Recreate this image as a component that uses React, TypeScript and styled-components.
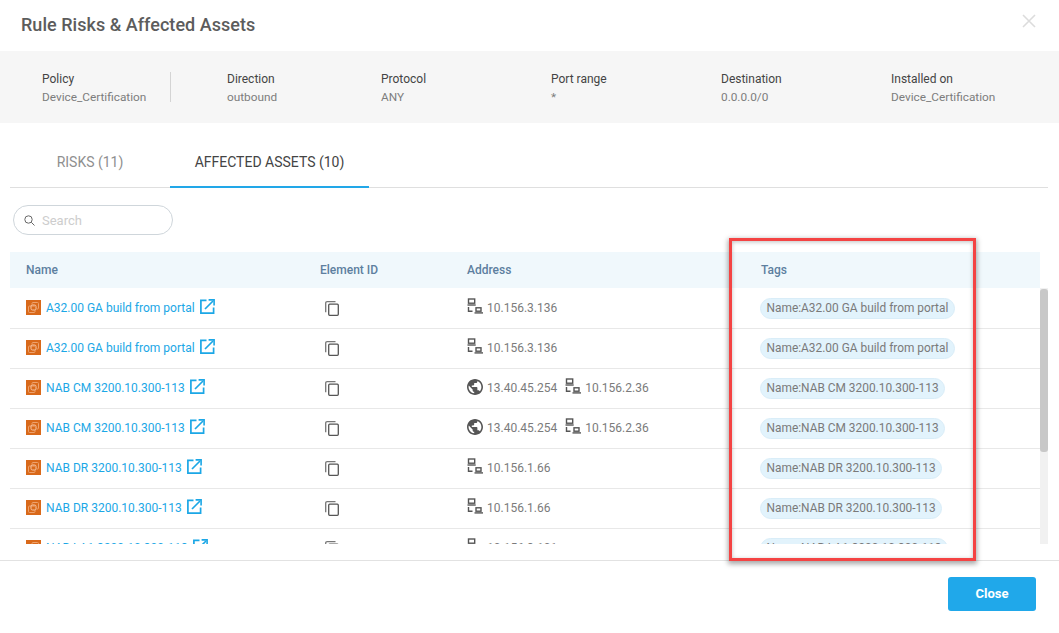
import React from "react";
import styled, { createGlobalStyle } from "styled-components";

const GlobalStyle = createGlobalStyle`
  html, body {
    margin: 0;
    padding: 0;
    background: #fff;
    font-family: Roboto, "Liberation Sans", sans-serif;
  }
`;

const Modal = styled.div`
  position: relative;
  width: 1059px;
  height: 633px;
  overflow: hidden;
  display: flex;
  flex-direction: column;
  background: #fff;
`;

const Header = styled.div`
  height: 51px;
  flex: none;
  display: flex;
  align-items: center;
  justify-content: space-between;
  padding: 0 23px 2px 21px;
  box-sizing: border-box;
`;

const Title = styled.h1`
  margin: 0;
  font-size: 18px;
  font-weight: 500;
  letter-spacing: 0.03px;
  color: #5c5c5c;
`;

const CloseX = styled.svg`
  width: 14px;
  height: 14px;
  margin-bottom: 8px;
  stroke: #dcdcdc;
  stroke-width: 1.6;
  fill: none;
`;

const Summary = styled.div`
  height: 72px;
  flex: none;
  background: #f6f6f6;
  display: flex;
  align-items: center;
  padding-left: 42px;
`;

const SummaryItem = styled.div<{ $width: number; $divided?: boolean }>`
  width: ${(p) => p.$width}px;
  height: 30px;
  flex: none;
  box-sizing: border-box;
  font-size: 12px;
  line-height: 18px;
  border-right: ${(p) => (p.$divided ? "1px solid #d4d4d4" : "none")};
`;

const SummaryLabel = styled.div`
  color: #444;
  margin-top: -2px;
`;

const SummaryValue = styled.div`
  color: #7d7d7d;
  font-size: 11.8px;
  white-space: nowrap;
`;

const DividerGap = styled.div`
  width: 56px;
  flex: none;
`;

const Tabs = styled.div`
  height: 65px;
  flex: none;
  margin: 0 11px 0 10px;
  display: flex;
  box-sizing: border-box;
  border-bottom: 1px solid #dfdfdf;
`;

const Tab = styled.div<{ $active?: boolean }>`
  width: ${(p) => (p.$active ? 199 : 160)}px;
  height: 65px;
  box-sizing: border-box;
  display: flex;
  align-items: center;
  justify-content: center;
  font-size: 14px;
  padding-top: 15px;
  color: ${(p) => (p.$active ? "#444" : "#8f8f8f")};
  border-bottom: 2px solid ${(p) => (p.$active ? "#22a7e8" : "transparent")};
`;

const SearchRow = styled.div`
  height: 64px;
  flex: none;
  padding: 17px 0 0 13px;
  box-sizing: border-box;
`;

const SearchBox = styled.div`
  width: 160px;
  height: 30px;
  box-sizing: border-box;
  border: 1px solid #cfd6db;
  border-radius: 15px;
  display: flex;
  align-items: center;
  gap: 7px;
  padding-left: 10px;
  font-size: 13px;
  color: #cdcdcd;
`;

const TableWrap = styled.div`
  margin-left: 10px;
  width: 1038px;
  height: 292px;
  flex: none;
  display: flex;
  flex-direction: column;
`;

const HeadRow = styled.div`
  width: 1030px;
  height: 36px;
  flex: none;
  display: grid;
  grid-template-columns: 294px 147px 294px 295px;
  align-items: center;
  background: #f0f8fc;
  font-size: 12px;
  font-weight: 500;
  color: #5d7f9f;
`;

const HeadCell = styled.div`
  padding-left: 16px;
`;

const BodyWrap = styled.div`
  position: relative;
  height: 256px;
  overflow: hidden;
  display: flex;
`;

const Rows = styled.div`
  width: 1030px;
  flex: none;
  padding-top: 1px;
`;

const Row = styled.div`
  height: 40px;
  box-sizing: border-box;
  padding-bottom: 2px;
  display: grid;
  grid-template-columns: 294px 147px 294px 295px;
  align-items: center;
  border-bottom: 1px solid #e8e8e8;
  font-size: 12px;
`;

const NameCell = styled.div`
  padding-left: 16px;
  display: flex;
  align-items: center;
  color: #1ba7e6;
`;

const NameText = styled.span`
  margin-left: 5px;
  white-space: nowrap;
`;

const CopyCell = styled.div`
  padding: 2px 0 0 21px;
  display: flex;
`;

const AddressCell = styled.div`
  padding-left: 16px;
  display: flex;
  align-items: center;
  color: #7b7b7b;
  white-space: nowrap;
`;

const AddressPart = styled.span`
  display: flex;
  align-items: center;
  gap: 4px;
  margin-right: 8px;
`;

const TagCell = styled.div`
  padding: 2px 0 0 15px;
  display: flex;
`;

const Tag = styled.span`
  height: 21px;
  line-height: 19px;
  box-sizing: border-box;
  padding: 0 5.5px;
  border: 1px solid #d9edf8;
  border-radius: 11px;
  background: #e2f3fc;
  color: #7a7a7a;
  font-size: 11.9px;
  white-space: nowrap;
`;

const ScrollTrack = styled.div`
  width: 8px;
  flex: none;
  background: #f1f1f1;
`;

const ScrollThumb = styled.div`
  height: 163px;
  margin-top: 1px;
  border-radius: 3px;
  background: #c8c8c8;
`;

const Footer = styled.div`
  margin-top: 16px;
  flex: 1;
  border-top: 1px solid #e2e2e2;
  display: flex;
  justify-content: flex-end;
  padding: 16px 23px 0 0;
`;

const CloseButton = styled.button`
  width: 88px;
  height: 34px;
  border: none;
  border-radius: 3px;
  background: #20a8ea;
  color: #fff;
  font-family: inherit;
  font-size: 13px;
  font-weight: 700;
  padding: 0 0 2px;
`;

const Highlight = styled.div`
  position: absolute;
  left: 729px;
  top: 238px;
  width: 247px;
  height: 323px;
  box-sizing: border-box;
  border: 3px solid #f44343;
  box-shadow: 0 2px 5px 1px rgba(0, 0, 0, 0.35), inset 0 1px 4px rgba(0, 0, 0, 0.25);
  pointer-events: none;
`;

const OrangeBadge = () => (
  <svg width="15" height="15" viewBox="0 0 15 15" style={{ flex: "none" }}>
    <rect width="15" height="15" fill="#d9691a" />
    <g fill="none">
      <path d="M6 4.5V3.5q0-1 1-1h4.5q1 0 1 1V8q0 1-1 1h-1" stroke="#eea26c" />
      <path d="M9 6H3.5q-1 0-1 1v4.5q0 1 1 1H8q1 0 1-1V10" stroke="#eea26c" />
      <rect x="5" y="5" width="5" height="5" rx="1.5" stroke="#f6c7a5" />
    </g>
  </svg>
);

const LinkIcon = () => (
  <svg width="15" height="15" viewBox="0 0 15 15" fill="none" stroke="#1ba7e6" strokeWidth="1.7" style={{ flex: "none", margin: "-3px 0 0 5px" }}>
    <path d="M6.5 1.4H.9v12.7h12.7V8.5" />
    <path d="M5 10 13 2" />
    <path d="M8.6 0.9h5.5v5.5" strokeWidth="1.6" />
  </svg>
);

const CopyIcon = () => (
  <svg width="14" height="15" viewBox="0 0 14 15" fill="none" strokeWidth="1.3">
    <path d="M10.5.7H2.2Q.7.7.7 2.2v9" stroke="#777" />
    <rect x="3.7" y="3.2" width="9.6" height="11.1" rx="1" stroke="#555" />
  </svg>
);

const NetworkIcon = () => (
  <svg width="16" height="16" viewBox="0 0 16 16" style={{ flex: "none", marginTop: "-3px" }} fill="none" stroke="#555" strokeWidth="1.4">
    <rect x="1.5" y="1" width="6.2" height="4.2" />
    <path d="M.5 7h8.2" />
    <path d="M1.5 9v4.2h4" />
    <rect x="9" y="9.8" width="5" height="3.4" />
    <path d="M7.5 14.9h8.5" />
  </svg>
);

const GlobeIcon = () => (
  <svg width="16" height="16" viewBox="2 2 20 20" style={{ flex: "none", marginTop: "-2px" }} fill="#555">
    <path d="M12 2C6.48 2 2 6.48 2 12s4.48 10 10 10 10-4.48 10-10S17.52 2 12 2zm-1 17.93c-3.95-.49-7-3.85-7-7.93 0-.62.08-1.21.21-1.79L9 15v1c0 1.1.9 2 2 2v1.93zm6.9-2.54c-.26-.81-1-1.39-1.9-1.39h-1v-3c0-.55-.45-1-1-1H8v-2h2c.55 0 1-.45 1-1V7h2c1.1 0 2-.9 2-2v-.41c2.93 1.19 5 4.06 5 7.41 0 2.08-.8 3.97-2.1 5.39z" />
  </svg>
);

const rows = [
  { name: "A32.00 GA build from portal", address: "10.156.3.136" },
  { name: "A32.00 GA build from portal", address: "10.156.3.136" },
  { name: "NAB CM 3200.10.300-113", publicIp: "13.40.45.254", address: "10.156.2.36" },
  { name: "NAB CM 3200.10.300-113", publicIp: "13.40.45.254", address: "10.156.2.36" },
  { name: "NAB DR 3200.10.300-113", address: "10.156.1.66" },
  { name: "NAB DR 3200.10.300-113", address: "10.156.1.66" },
  { name: "NAB LA1 3200.10.300-113", address: "10.156.3.101" },
];

const summary = [
  { label: "Direction", value: "outbound", width: 154 },
  { label: "Protocol", value: "ANY", width: 170 },
  { label: "Port range", value: "*", width: 170 },
  { label: "Destination", value: "0.0.0.0/0", width: 170 },
  { label: "Installed on", value: "Device_Certification", width: 140 },
];

const App = () => {
  return (
    <Modal>
      <GlobalStyle />
      <Header>
        <Title>Rule Risks &amp; Affected Assets</Title>
        <CloseX viewBox="0 0 14 14">
          <path d="M1 1l12 12M13 1 1 13" />
        </CloseX>
      </Header>

      <Summary>
        <SummaryItem $width={129} $divided>
          <SummaryLabel>Policy</SummaryLabel>
          <SummaryValue>Device_Certification</SummaryValue>
        </SummaryItem>
        <DividerGap />
        {summary.map((item) => (
          <SummaryItem key={item.label} $width={item.width}>
            <SummaryLabel>{item.label}</SummaryLabel>
            <SummaryValue>{item.value}</SummaryValue>
          </SummaryItem>
        ))}
      </Summary>

      <Tabs>
        <Tab>RISKS (11)</Tab>
        <Tab $active>AFFECTED ASSETS (10)</Tab>
      </Tabs>

      <SearchRow>
        <SearchBox>
          <svg width="11" height="11" viewBox="0 0 11 11" fill="none" stroke="#666" strokeWidth="1">
            <circle cx="4.5" cy="4.5" r="3.7" />
            <path d="M7.3 7.3l3.2 3.2" />
          </svg>
          Search
        </SearchBox>
      </SearchRow>

      <TableWrap>
        <HeadRow>
          <HeadCell>Name</HeadCell>
          <HeadCell>Element ID</HeadCell>
          <HeadCell>Address</HeadCell>
          <HeadCell>Tags</HeadCell>
        </HeadRow>
        <BodyWrap>
          <Rows>
            {rows.map((row, i) => (
              <Row key={i}>
                <NameCell>
                  <OrangeBadge />
                  <NameText>{row.name}</NameText>
                  <LinkIcon />
                </NameCell>
                <CopyCell>
                  <CopyIcon />
                </CopyCell>
                <AddressCell>
                  {row.publicIp && (
                    <AddressPart>
                      <GlobeIcon />
                      {row.publicIp}
                    </AddressPart>
                  )}
                  <AddressPart>
                    <NetworkIcon />
                    {row.address}
                  </AddressPart>
                </AddressCell>
                <TagCell>
                  <Tag>Name:{row.name}</Tag>
                </TagCell>
              </Row>
            ))}
          </Rows>
          <ScrollTrack>
            <ScrollThumb />
          </ScrollTrack>
        </BodyWrap>
      </TableWrap>

      <Footer>
        <CloseButton>Close</CloseButton>
      </Footer>

      <Highlight />
    </Modal>
  );
};

export default App;
